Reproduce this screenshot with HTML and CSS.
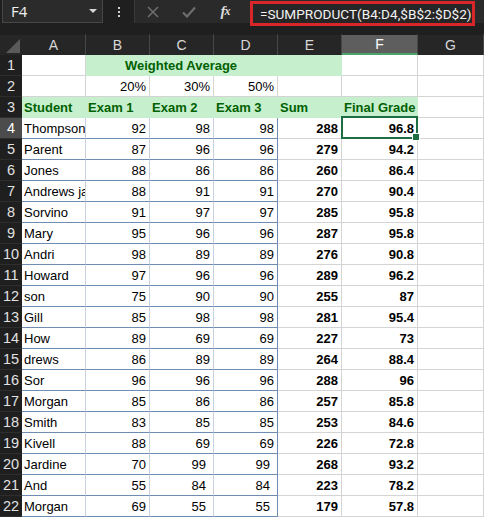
FILE: index.html
```html
<!DOCTYPE html>
<html>
<head>
<meta charset="utf-8">
<link rel="stylesheet" href="styles.css">
</head>
<body>
<div class="topbar">
  <div class="namebox"><span class="nm">F4</span><span class="caret"></span></div>
  <div class="dots"><i></i><i></i><i></i></div>
  <div class="fbar">
    <div class="slot">
      <svg width="12" height="12" viewBox="0 0 12 12"><path d="M1 1 L11 11 M11 1 L1 11" stroke="#6d6d6d" stroke-width="1.6" fill="none"/></svg>
    </div>
    <div class="slot">
      <svg width="14" height="12" viewBox="0 0 14 12"><path d="M1 6.5 L5 10.5 L13 1.5" stroke="#6d6d6d" stroke-width="2.2" fill="none"/></svg>
    </div>
    <div class="slot fx">f<span>x</span></div>
    <div class="formula">=SUMPRODUCT(B4:D4,$B$2:$D$2)</div>
  </div>
</div>
<div class="sheet">
  <div class="corner"><span class="tri"></span></div>
  <div class="ch">A</div><div class="ch">B</div><div class="ch">C</div><div class="ch">D</div><div class="ch">E</div><div class="ch sel">F</div><div class="ch">G</div>

  <div class="rh">1</div>
  <div class="c"></div><div class="c g mid span3">Weighted Average</div><div class="c g"></div><div class="c"></div><div class="c"></div>

  <div class="rh">2</div>
  <div class="c"></div><div class="c r">20%</div><div class="c r">30%</div><div class="c r">50%</div><div class="c"></div><div class="c"></div><div class="c"></div>

  <div class="rh">3</div>
  <div class="c g">Student</div><div class="c g">Exam 1</div><div class="c g">Exam 2</div><div class="c g">Exam 3</div><div class="c g">Sum</div><div class="c g">Final Grade</div><div class="c"></div>

  <div class="rh rsel">4</div>
  <div class="c t">Thompson</div><div class="c t r">92</div><div class="c t r">98</div><div class="c t te r">98</div><div class="c r b">288</div><div class="c r b active">96.8</div><div class="c"></div>

  <div class="rh">5</div>
  <div class="c t">Parent</div><div class="c t r">87</div><div class="c t r">96</div><div class="c t te r">96</div><div class="c r b">279</div><div class="c r b">94.2</div><div class="c"></div>

  <div class="rh">6</div>
  <div class="c t">Jones</div><div class="c t r">88</div><div class="c t r">86</div><div class="c t te r">86</div><div class="c r b">260</div><div class="c r b">86.4</div><div class="c"></div>

  <div class="rh">7</div>
  <div class="c t">Andrews james</div><div class="c t r">88</div><div class="c t r">91</div><div class="c t te r">91</div><div class="c r b">270</div><div class="c r b">90.4</div><div class="c"></div>

  <div class="rh">8</div>
  <div class="c t">Sorvino</div><div class="c t r">91</div><div class="c t r">97</div><div class="c t te r">97</div><div class="c r b">285</div><div class="c r b">95.8</div><div class="c"></div>

  <div class="rh">9</div>
  <div class="c t">Mary</div><div class="c t r">95</div><div class="c t r">96</div><div class="c t te r">96</div><div class="c r b">287</div><div class="c r b">95.8</div><div class="c"></div>

  <div class="rh">10</div>
  <div class="c t">Andri</div><div class="c t r">98</div><div class="c t r">89</div><div class="c t te r">89</div><div class="c r b">276</div><div class="c r b">90.8</div><div class="c"></div>

  <div class="rh">11</div>
  <div class="c t">Howard</div><div class="c t r">97</div><div class="c t r">96</div><div class="c t te r">96</div><div class="c r b">289</div><div class="c r b">96.2</div><div class="c"></div>

  <div class="rh">12</div>
  <div class="c t">son</div><div class="c t r">75</div><div class="c t r">90</div><div class="c t te r">90</div><div class="c r b">255</div><div class="c r b">87</div><div class="c"></div>

  <div class="rh">13</div>
  <div class="c t">Gill</div><div class="c t r">85</div><div class="c t r">98</div><div class="c t te r">98</div><div class="c r b">281</div><div class="c r b">95.4</div><div class="c"></div>

  <div class="rh">14</div>
  <div class="c t">How</div><div class="c t r">89</div><div class="c t r">69</div><div class="c t te r">69</div><div class="c r b">227</div><div class="c r b">73</div><div class="c"></div>

  <div class="rh">15</div>
  <div class="c t">drews</div><div class="c t r">86</div><div class="c t r">89</div><div class="c t te r">89</div><div class="c r b">264</div><div class="c r b">88.4</div><div class="c"></div>

  <div class="rh">16</div>
  <div class="c t">Sor</div><div class="c t r">96</div><div class="c t r">96</div><div class="c t te r">96</div><div class="c r b">288</div><div class="c r b">96</div><div class="c"></div>

  <div class="rh">17</div>
  <div class="c t">Morgan</div><div class="c t r">85</div><div class="c t r">86</div><div class="c t te r">86</div><div class="c r b">257</div><div class="c r b">85.8</div><div class="c"></div>

  <div class="rh">18</div>
  <div class="c t">Smith</div><div class="c t r">83</div><div class="c t r">85</div><div class="c t te r">85</div><div class="c r b">253</div><div class="c r b">84.6</div><div class="c"></div>

  <div class="rh">19</div>
  <div class="c t">Kivell</div><div class="c t r">88</div><div class="c t r">69</div><div class="c t te r">69</div><div class="c r b">226</div><div class="c r b">72.8</div><div class="c"></div>

  <div class="rh">20</div>
  <div class="c t">Jardine</div><div class="c t r">70</div><div class="c t r ind">99</div><div class="c t te r ind">99</div><div class="c r b">268</div><div class="c r b">93.2</div><div class="c"></div>

  <div class="rh">21</div>
  <div class="c t">And</div><div class="c t r">55</div><div class="c t r ind">84</div><div class="c t te r ind">84</div><div class="c r b">223</div><div class="c r b">78.2</div><div class="c"></div>

  <div class="rh">22</div>
  <div class="c t">Morgan</div><div class="c t r">69</div><div class="c t r ind">55</div><div class="c t te r ind">55</div><div class="c r b">179</div><div class="c r b">57.8</div><div class="c"></div>
</div>
</body>
</html>
```

FILE: styles.css
```css
* {
  box-sizing: border-box;
  margin: 0;
  padding: 0;
}

html, body {
  width: 484px;
  height: 518px;
  overflow: hidden;
  background: #ffffff;
}

body {
  font-family: "Liberation Sans", Arial, sans-serif;
}

.topbar {
  height: 33px;
  background: #1f1f1f;
  display: flex;
  align-items: flex-start;
}

.namebox {
  width: 101px;
  height: 23px;
  margin-left: 2px;
  background: #2b2b2b;
  border: 1px solid #474747;
  border-top: none;
  display: flex;
  align-items: center;
  justify-content: space-between;
  padding: 0 5px 0 8px;
}

.nm {
  color: #f0f0f0;
  font-size: 15px;
  font-family: "Open Sans", "Liberation Sans", sans-serif;
}

.caret {
  width: 0;
  height: 0;
  border-left: 4px solid transparent;
  border-right: 4px solid transparent;
  border-top: 4px solid #d6d6d6;
}

.dots {
  width: 31px;
  height: 23px;
  display: flex;
  flex-direction: column;
  align-items: center;
  justify-content: center;
  gap: 2px;
}

.dots i {
  display: block;
  width: 2px;
  height: 2px;
  background: #d0d0d0;
}

.fbar {
  flex: 1;
  height: 23px;
  background: #2a2a2a;
  display: flex;
  align-items: flex-start;
  border-left: 1px solid #3a3a3a;
}

.slot {
  width: 36px;
  height: 23px;
  display: flex;
  align-items: center;
  justify-content: center;
}

.fx {
  color: #dcdcdc;
  font-family: "Liberation Serif", serif;
  font-style: italic;
  font-weight: bold;
  font-size: 15px;
  letter-spacing: -1px;
}

.fx span {
  font-size: 12px;
}

.formula {
  margin-left: 7px;
  margin-top: 1px;
  width: 225px;
  height: 25px;
  border: 3px solid #d9262a;
  background: #262626;
  color: #f2f2f2;
  font-family: Roboto, "Liberation Sans", sans-serif;
  font-size: 13.6px;
  padding-left: 7px;
  display: flex;
  align-items: center;
  white-space: nowrap;
}

.sheet {
  display: grid;
  grid-template-columns: 22px 64px 64px 64px 64px 64px 76px 66px;
  grid-template-rows: 22px repeat(22, 21px);
}

.corner {
  background: #262626;
  border-top: 2px solid #1f1f1f;
  position: relative;
  display: flex;
  align-items: flex-end;
  justify-content: flex-end;
  padding: 0 2px 2px 0;
}

.tri {
  width: 0;
  height: 0;
  border-left: 14px solid transparent;
  border-bottom: 14px solid #5a5a5a;
}

.ch {
  background: #262626;
  border-top: 2px solid #1f1f1f;
  border-right: 1px solid #474747;
  color: #d8d8d8;
  font-size: 14px;
  display: flex;
  align-items: center;
  justify-content: center;
}

.ch.sel {
  background: #5e5e5e;
  color: #ffffff;
  border-bottom: 2px solid #4aa36b;
}

.rh {
  background: #1f1f1f;
  border-bottom: 1px solid #2e2e2e;
  color: #e2e2e2;
  font-size: 14.5px;
  display: flex;
  align-items: center;
  justify-content: center;
}

.rh.rsel {
  background: #4c4c4c;
  color: #ffffff;
}

.c {
  border-right: 1px solid #d4d4d4;
  border-bottom: 1px solid #d4d4d4;
  display: flex;
  align-items: flex-end;
  padding: 0 3px 2px 2px;
  font-size: 13px;
  line-height: 15px;
  color: #000000;
  white-space: nowrap;
  overflow: hidden;
}

.r {
  justify-content: flex-end;
}

.b {
  font-weight: bold;
}

.g {
  background: #c6efce;
  border-color: #c6efce;
  color: #006100;
  font-weight: bold;
}

.mid {
  justify-content: center;
}

.span3 {
  grid-column: span 3;
}

.t {
  border-bottom-color: #6f8cb3;
  border-right-color: #c8d1de;
}

.te {
  border-right-color: #6f8cb3;
}

.ind {
  padding-right: 7px;
}

.active {
  position: relative;
  overflow: visible;
}

.active::after {
  content: "";
  position: absolute;
  left: -1px;
  top: -2px;
  right: -1px;
  bottom: -1px;
  border: 2px solid #1f6e43;
}

.active::before {
  content: "";
  position: absolute;
  right: -3px;
  bottom: -3px;
  width: 6px;
  height: 6px;
  background: #1f6e43;
  border: 1px solid #ffffff;
  z-index: 2;
}
```
